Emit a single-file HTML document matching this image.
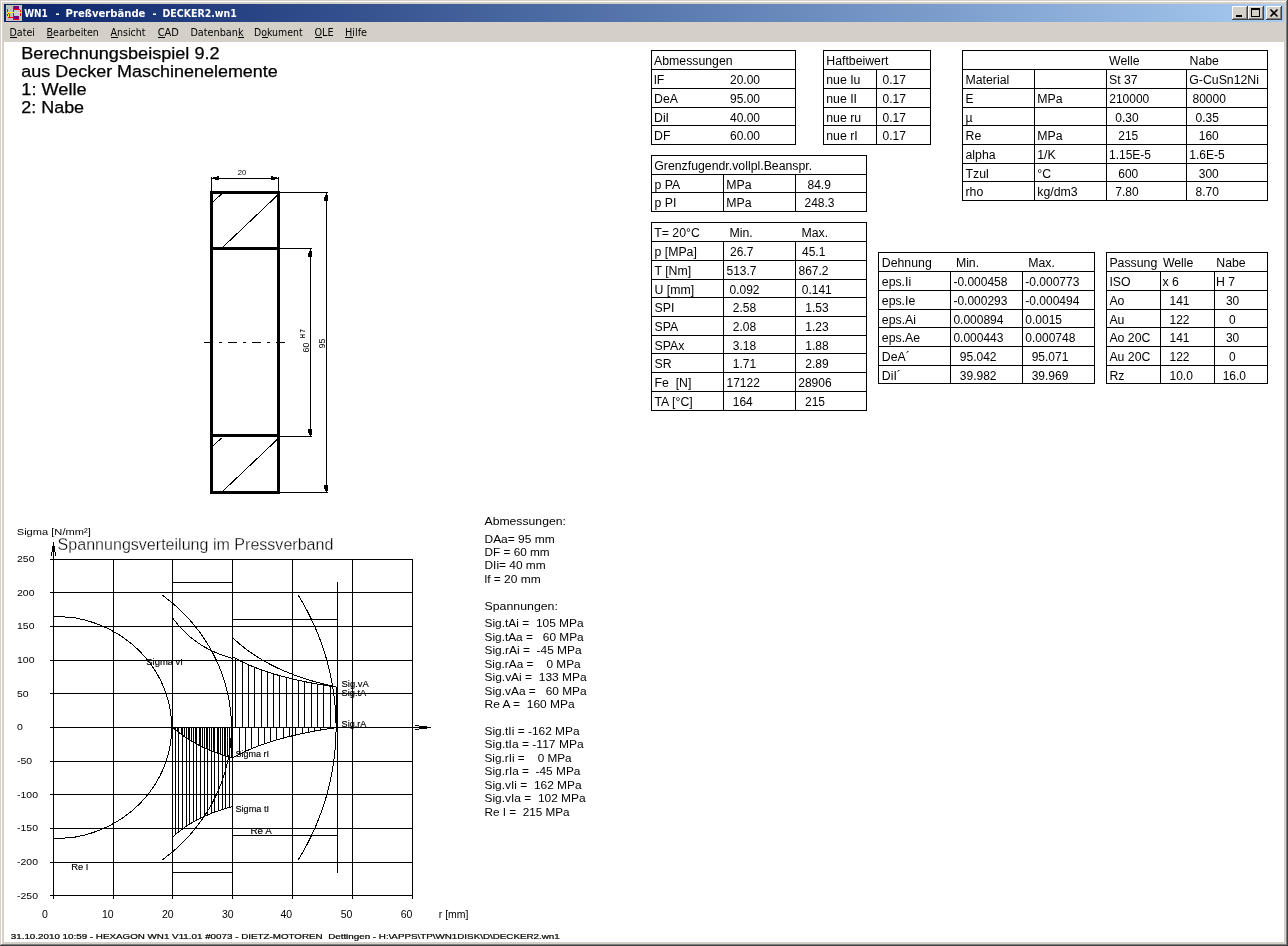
<!DOCTYPE html>
<html lang="de"><head><meta charset="utf-8"><title>WN1 - Preßverbände - DECKER2.wn1</title>
<style>
html,body{margin:0;padding:0;background:#d4d0c8;overflow:hidden}
svg{display:block;font-family:"Liberation Sans",sans-serif;will-change:transform;-webkit-font-smoothing:antialiased}
svg text{white-space:pre}
svg rect{shape-rendering:crispEdges}
</style></head><body>
<svg width="1288" height="946" viewBox="0 0 1288 946">
<rect x="0" y="0" width="1288" height="946" fill="#d4d0c8"/>
<rect x="1" y="1" width="1285" height="1" fill="#fff"/>
<rect x="1" y="1" width="1" height="943" fill="#fff"/>
<rect x="1287" y="0" width="1" height="946" fill="#404040"/>
<rect x="0" y="945" width="1288" height="1" fill="#404040"/>
<rect x="1286" y="1" width="1" height="944" fill="#808080"/>
<rect x="1" y="944" width="1286" height="1" fill="#808080"/>
<defs><linearGradient id="tg" x1="0" x2="1" y1="0" y2="0"><stop offset="0" stop-color="#0a246a"/><stop offset="1" stop-color="#a6caf0"/></linearGradient></defs>
<rect x="4" y="4" width="1280" height="18" fill="url(#tg)"/>
<rect x="4" y="42" width="1280" height="900" fill="#fff"/>
<rect x="6" y="5" width="16" height="16" fill="#c0c0c0"/>
<rect x="6" y="5" width="1" height="1" fill="#d4d0c8"/>
<rect x="21" y="5" width="1" height="1" fill="#d4d0c8"/>
<rect x="6" y="20" width="1" height="1" fill="#d4d0c8"/>
<rect x="21" y="20" width="1" height="1" fill="#d4d0c8"/>
<rect x="14" y="10" width="6" height="6" fill="#c4cccc"/>
<rect x="13" y="6" width="1" height="14" fill="#ff0000"/>
<rect x="14" y="9" width="6" height="1" fill="#ff0000"/>
<rect x="20" y="10" width="1" height="6" fill="#ff0000"/>
<rect x="13" y="19" width="6" height="1" fill="#ff0000"/>
<rect x="7" y="9" width="1" height="3" fill="#ff0000"/>
<rect x="7" y="14" width="1" height="2" fill="#ff0000"/>
<rect x="8" y="13" width="1" height="1" fill="#ff0000"/>
<rect x="9" y="14" width="1" height="4" fill="#ff0000"/>
<rect x="8" y="17" width="6" height="1" fill="#ff0000"/>
<rect x="14" y="6" width="5" height="3" fill="#800080"/>
<rect x="14" y="16" width="5" height="3" fill="#800080"/>
<rect x="7" y="12" width="7" height="1" fill="#ffff00"/>
<rect x="15" y="12" width="1" height="1" fill="#ffff00"/>
<rect x="17" y="12" width="1" height="1" fill="#ffff00"/>
<rect x="19" y="12" width="2" height="1" fill="#ffff00"/>
<rect x="8" y="14" width="1" height="3" fill="#ffff00"/>
<text x="24.2" y="17" font-size="10.8" textLength="23.60" lengthAdjust="spacingAndGlyphs" fill="#fff" font-weight="bold" font-family="DejaVu Sans Condensed, DejaVu Sans, Liberation Sans, sans-serif">WN1</text>
<text x="55.5" y="17" font-size="10.8" fill="#fff" font-weight="bold" font-family="DejaVu Sans Condensed, DejaVu Sans, Liberation Sans, sans-serif">-</text>
<text x="65.6" y="17" font-size="10.8" textLength="79.80" lengthAdjust="spacingAndGlyphs" fill="#fff" font-weight="bold" font-family="DejaVu Sans Condensed, DejaVu Sans, Liberation Sans, sans-serif">Preßverbände</text>
<text x="152.4" y="17" font-size="10.8" fill="#fff" font-weight="bold" font-family="DejaVu Sans Condensed, DejaVu Sans, Liberation Sans, sans-serif">-</text>
<text x="162.5" y="17" font-size="10.8" textLength="74.20" lengthAdjust="spacingAndGlyphs" fill="#fff" font-weight="bold" font-family="DejaVu Sans Condensed, DejaVu Sans, Liberation Sans, sans-serif">DECKER2.wn1</text>
<rect x="1232" y="6" width="16" height="14" fill="#d4d0c8"/>
<rect x="1232" y="6" width="15" height="1" fill="#fff"/>
<rect x="1232" y="6" width="1" height="13" fill="#fff"/>
<rect x="1247" y="6" width="1" height="14" fill="#404040"/>
<rect x="1232" y="19" width="16" height="1" fill="#404040"/>
<rect x="1246" y="7" width="1" height="12" fill="#808080"/>
<rect x="1233" y="18" width="14" height="1" fill="#808080"/>
<rect x="1248" y="6" width="16" height="14" fill="#d4d0c8"/>
<rect x="1248" y="6" width="15" height="1" fill="#fff"/>
<rect x="1248" y="6" width="1" height="13" fill="#fff"/>
<rect x="1263" y="6" width="1" height="14" fill="#404040"/>
<rect x="1248" y="19" width="16" height="1" fill="#404040"/>
<rect x="1262" y="7" width="1" height="12" fill="#808080"/>
<rect x="1249" y="18" width="14" height="1" fill="#808080"/>
<rect x="1266" y="6" width="16" height="14" fill="#d4d0c8"/>
<rect x="1266" y="6" width="15" height="1" fill="#fff"/>
<rect x="1266" y="6" width="1" height="13" fill="#fff"/>
<rect x="1281" y="6" width="1" height="14" fill="#404040"/>
<rect x="1266" y="19" width="16" height="1" fill="#404040"/>
<rect x="1280" y="7" width="1" height="12" fill="#808080"/>
<rect x="1267" y="18" width="14" height="1" fill="#808080"/>
<rect x="1236" y="15" width="6" height="2" fill="#000"/>
<rect x="1251" y="8" width="9" height="2" fill="#000"/><rect x="1251" y="10" width="1" height="7" fill="#000"/><rect x="1259" y="10" width="1" height="7" fill="#000"/><rect x="1251" y="16" width="9" height="1" fill="#000"/>
<path d="M1270.5 9.5 L1277.5 16.5 M1277.5 9.5 L1270.5 16.5" stroke="#000" stroke-width="1.7" fill="none"/>
<text x="9.5" y="36" font-size="10.8" textLength="25.40" lengthAdjust="spacingAndGlyphs" font-family="DejaVu Sans Condensed, DejaVu Sans, Liberation Sans, sans-serif">Datei</text>
<rect x="9.5" y="37" width="7.9" height="1" fill="#000"/>
<text x="46.6" y="36" font-size="10.8" textLength="52.30" lengthAdjust="spacingAndGlyphs" font-family="DejaVu Sans Condensed, DejaVu Sans, Liberation Sans, sans-serif">Bearbeiten</text>
<rect x="46.6" y="37" width="7.2" height="1" fill="#000"/>
<text x="110.6" y="36" font-size="10.8" textLength="34.90" lengthAdjust="spacingAndGlyphs" font-family="DejaVu Sans Condensed, DejaVu Sans, Liberation Sans, sans-serif">Ansicht</text>
<rect x="110.6" y="37" width="7.1" height="1" fill="#000"/>
<text x="157.7" y="36" font-size="10.8" textLength="21.20" lengthAdjust="spacingAndGlyphs" font-family="DejaVu Sans Condensed, DejaVu Sans, Liberation Sans, sans-serif">CAD</text>
<rect x="157.7" y="37" width="7.3" height="1" fill="#000"/>
<text x="190.4" y="36" font-size="10.8" textLength="53.10" lengthAdjust="spacingAndGlyphs" font-family="DejaVu Sans Condensed, DejaVu Sans, Liberation Sans, sans-serif">Datenbank</text>
<rect x="238.0" y="37" width="5.5" height="1" fill="#000"/>
<text x="254" y="36" font-size="10.8" textLength="48.60" lengthAdjust="spacingAndGlyphs" font-family="DejaVu Sans Condensed, DejaVu Sans, Liberation Sans, sans-serif">Dokument</text>
<rect x="261.7" y="37" width="5.9" height="1" fill="#000"/>
<text x="314.5" y="36" font-size="10.8" textLength="19.10" lengthAdjust="spacingAndGlyphs" font-family="DejaVu Sans Condensed, DejaVu Sans, Liberation Sans, sans-serif">OLE</text>
<rect x="314.5" y="37" width="7.4" height="1" fill="#000"/>
<text x="345" y="36" font-size="10.8" textLength="22.10" lengthAdjust="spacingAndGlyphs" font-family="DejaVu Sans Condensed, DejaVu Sans, Liberation Sans, sans-serif">Hilfe</text>
<rect x="345.0" y="37" width="8.0" height="1" fill="#000"/>
<text x="21.3" y="59" font-size="16.8" textLength="198.30" lengthAdjust="spacingAndGlyphs" stroke="#000" stroke-width="0.25">Berechnungsbeispiel 9.2</text>
<text x="21.3" y="77" font-size="16.8" textLength="256.50" lengthAdjust="spacingAndGlyphs" stroke="#000" stroke-width="0.25">aus Decker Maschinenelemente</text>
<text x="21.3" y="94.8" font-size="16.8" textLength="65.30" lengthAdjust="spacingAndGlyphs" stroke="#000" stroke-width="0.25">1: Welle</text>
<text x="21.3" y="112.8" font-size="16.8" textLength="62.80" lengthAdjust="spacingAndGlyphs" stroke="#000" stroke-width="0.25">2: Nabe</text>
<rect x="651" y="50" width="145" height="1" fill="#000"/>
<rect x="651" y="69" width="145" height="1" fill="#000"/>
<rect x="651" y="88" width="145" height="1" fill="#000"/>
<rect x="651" y="107" width="145" height="1" fill="#000"/>
<rect x="651" y="125" width="145" height="1" fill="#000"/>
<rect x="651" y="144" width="145" height="1" fill="#000"/>
<rect x="651" y="50" width="1" height="95" fill="#000"/>
<rect x="795" y="50" width="1" height="95" fill="#000"/>
<text x="654" y="64.5" font-size="12" textLength="78.64" lengthAdjust="spacingAndGlyphs">Abmessungen</text>
<text x="654" y="83.5" font-size="12" textLength="10.25" lengthAdjust="spacingAndGlyphs">lF</text>
<text x="730" y="83.5" font-size="12" textLength="30.03" lengthAdjust="spacingAndGlyphs">20.00</text>
<text x="654" y="102.5" font-size="12" textLength="23.93" lengthAdjust="spacingAndGlyphs">DeA</text>
<text x="730" y="102.5" font-size="12" textLength="30.03" lengthAdjust="spacingAndGlyphs">95.00</text>
<text x="654" y="121.5" font-size="12" textLength="15.03" lengthAdjust="spacingAndGlyphs">DiI</text>
<text x="730" y="121.5" font-size="12" textLength="30.03" lengthAdjust="spacingAndGlyphs">40.00</text>
<text x="654" y="139.5" font-size="12" textLength="16.40" lengthAdjust="spacingAndGlyphs">DF</text>
<text x="730" y="139.5" font-size="12" textLength="30.03" lengthAdjust="spacingAndGlyphs">60.00</text>
<rect x="823" y="50" width="108" height="1" fill="#000"/>
<rect x="823" y="69" width="108" height="1" fill="#000"/>
<rect x="823" y="88" width="108" height="1" fill="#000"/>
<rect x="823" y="107" width="108" height="1" fill="#000"/>
<rect x="823" y="125" width="108" height="1" fill="#000"/>
<rect x="823" y="144" width="108" height="1" fill="#000"/>
<rect x="823" y="50" width="1" height="95" fill="#000"/>
<rect x="930" y="50" width="1" height="95" fill="#000"/>
<rect x="876" y="69" width="1" height="76" fill="#000"/>
<text x="826.25" y="64.5" font-size="12" textLength="62.21" lengthAdjust="spacingAndGlyphs">Haftbeiwert</text>
<text x="826.25" y="83.5" font-size="12" textLength="34.20" lengthAdjust="spacingAndGlyphs">nue Iu</text>
<text x="882.5" y="83.5" font-size="12" textLength="23.36" lengthAdjust="spacingAndGlyphs">0.17</text>
<text x="826.25" y="102.5" font-size="12" textLength="30.77" lengthAdjust="spacingAndGlyphs">nue II</text>
<text x="882.5" y="102.5" font-size="12" textLength="23.36" lengthAdjust="spacingAndGlyphs">0.17</text>
<text x="826.25" y="121.5" font-size="12" textLength="34.88" lengthAdjust="spacingAndGlyphs">nue ru</text>
<text x="882.5" y="121.5" font-size="12" textLength="23.36" lengthAdjust="spacingAndGlyphs">0.17</text>
<text x="826.25" y="139.5" font-size="12" textLength="31.45" lengthAdjust="spacingAndGlyphs">nue rI</text>
<text x="882.5" y="139.5" font-size="12" textLength="23.36" lengthAdjust="spacingAndGlyphs">0.17</text>
<rect x="651" y="155" width="216" height="1" fill="#000"/>
<rect x="651" y="174" width="216" height="1" fill="#000"/>
<rect x="651" y="192" width="216" height="1" fill="#000"/>
<rect x="651" y="211" width="216" height="1" fill="#000"/>
<rect x="651" y="155" width="1" height="57" fill="#000"/>
<rect x="866" y="155" width="1" height="57" fill="#000"/>
<rect x="723" y="174" width="1" height="38" fill="#000"/>
<rect x="795" y="174" width="1" height="38" fill="#000"/>
<text x="654.25" y="169.5" font-size="12" textLength="157.95" lengthAdjust="spacingAndGlyphs">Grenzfugendr.vollpl.Beanspr.</text>
<text x="654.5" y="188.5" font-size="12" textLength="25.75" lengthAdjust="spacingAndGlyphs">p PA</text>
<text x="726.25" y="188.5" font-size="12" textLength="25.29" lengthAdjust="spacingAndGlyphs">MPa</text>
<text x="807.5" y="188.5" font-size="12" textLength="23.36" lengthAdjust="spacingAndGlyphs">84.9</text>
<text x="654.5" y="206.5" font-size="12" textLength="21.88" lengthAdjust="spacingAndGlyphs">p PI</text>
<text x="726.25" y="206.5" font-size="12" textLength="25.29" lengthAdjust="spacingAndGlyphs">MPa</text>
<text x="804.5" y="206.5" font-size="12" textLength="30.03" lengthAdjust="spacingAndGlyphs">248.3</text>
<rect x="651" y="222" width="216" height="1" fill="#000"/>
<rect x="651" y="241" width="216" height="1" fill="#000"/>
<rect x="651" y="260" width="216" height="1" fill="#000"/>
<rect x="651" y="279" width="216" height="1" fill="#000"/>
<rect x="651" y="297" width="216" height="1" fill="#000"/>
<rect x="651" y="316" width="216" height="1" fill="#000"/>
<rect x="651" y="335" width="216" height="1" fill="#000"/>
<rect x="651" y="353" width="216" height="1" fill="#000"/>
<rect x="651" y="372" width="216" height="1" fill="#000"/>
<rect x="651" y="391" width="216" height="1" fill="#000"/>
<rect x="651" y="410" width="216" height="1" fill="#000"/>
<rect x="651" y="222" width="1" height="189" fill="#000"/>
<rect x="866" y="222" width="1" height="189" fill="#000"/>
<rect x="723" y="241" width="1" height="170" fill="#000"/>
<rect x="795" y="241" width="1" height="170" fill="#000"/>
<text x="654.25" y="236.5" font-size="12" textLength="45.60" lengthAdjust="spacingAndGlyphs">T= 20°C</text>
<text x="729.5" y="236.5" font-size="12" textLength="23.24" lengthAdjust="spacingAndGlyphs">Min.</text>
<text x="801.5" y="236.5" font-size="12" textLength="26.65" lengthAdjust="spacingAndGlyphs">Max.</text>
<text x="654.5" y="255.5" font-size="12" textLength="42.38" lengthAdjust="spacingAndGlyphs">p [MPa]</text>
<text x="730" y="255.5" font-size="12" textLength="23.36" lengthAdjust="spacingAndGlyphs">26.7</text>
<text x="802" y="255.5" font-size="12" textLength="23.36" lengthAdjust="spacingAndGlyphs">45.1</text>
<text x="654.5" y="274.5" font-size="12" textLength="36.67" lengthAdjust="spacingAndGlyphs">T [Nm]</text>
<text x="726.5" y="274.5" font-size="12" textLength="30.03" lengthAdjust="spacingAndGlyphs">513.7</text>
<text x="798.5" y="274.5" font-size="12" textLength="30.03" lengthAdjust="spacingAndGlyphs">867.2</text>
<text x="654.5" y="293.5" font-size="12" textLength="39.63" lengthAdjust="spacingAndGlyphs">U [mm]</text>
<text x="729.5" y="293.5" font-size="12" textLength="30.03" lengthAdjust="spacingAndGlyphs">0.092</text>
<text x="801.75" y="293.5" font-size="12" textLength="30.03" lengthAdjust="spacingAndGlyphs">0.141</text>
<text x="654.5" y="311.5" font-size="12" textLength="19.83" lengthAdjust="spacingAndGlyphs">SPI</text>
<text x="732.75" y="311.5" font-size="12" textLength="23.36" lengthAdjust="spacingAndGlyphs">2.58</text>
<text x="805.25" y="311.5" font-size="12" textLength="23.36" lengthAdjust="spacingAndGlyphs">1.53</text>
<text x="654.5" y="330.5" font-size="12" textLength="23.70" lengthAdjust="spacingAndGlyphs">SPA</text>
<text x="732.75" y="330.5" font-size="12" textLength="23.36" lengthAdjust="spacingAndGlyphs">2.08</text>
<text x="805.25" y="330.5" font-size="12" textLength="23.36" lengthAdjust="spacingAndGlyphs">1.23</text>
<text x="654.5" y="349.5" font-size="12" textLength="29.85" lengthAdjust="spacingAndGlyphs">SPAx</text>
<text x="732.75" y="349.5" font-size="12" textLength="23.36" lengthAdjust="spacingAndGlyphs">3.18</text>
<text x="805.25" y="349.5" font-size="12" textLength="23.36" lengthAdjust="spacingAndGlyphs">1.88</text>
<text x="654.5" y="367.5" font-size="12" textLength="17.09" lengthAdjust="spacingAndGlyphs">SR</text>
<text x="732.75" y="367.5" font-size="12" textLength="23.36" lengthAdjust="spacingAndGlyphs">1.71</text>
<text x="805.25" y="367.5" font-size="12" textLength="23.36" lengthAdjust="spacingAndGlyphs">2.89</text>
<text x="654.5" y="386.5" font-size="12" textLength="36.91" lengthAdjust="spacingAndGlyphs">Fe  [N]</text>
<text x="726.5" y="386.5" font-size="12" textLength="33.37" lengthAdjust="spacingAndGlyphs">17122</text>
<text x="798.25" y="386.5" font-size="12" textLength="33.37" lengthAdjust="spacingAndGlyphs">28906</text>
<text x="654.5" y="405.5" font-size="12" textLength="38.18" lengthAdjust="spacingAndGlyphs">TA [°C]</text>
<text x="732.75" y="405.5" font-size="12" textLength="20.02" lengthAdjust="spacingAndGlyphs">164</text>
<text x="805" y="405.5" font-size="12" textLength="20.02" lengthAdjust="spacingAndGlyphs">215</text>
<rect x="962" y="50" width="306" height="1" fill="#000"/>
<rect x="962" y="69" width="306" height="1" fill="#000"/>
<rect x="962" y="88" width="306" height="1" fill="#000"/>
<rect x="962" y="107" width="306" height="1" fill="#000"/>
<rect x="962" y="125" width="306" height="1" fill="#000"/>
<rect x="962" y="144" width="306" height="1" fill="#000"/>
<rect x="962" y="163" width="306" height="1" fill="#000"/>
<rect x="962" y="181" width="306" height="1" fill="#000"/>
<rect x="962" y="200" width="306" height="1" fill="#000"/>
<rect x="962" y="50" width="1" height="151" fill="#000"/>
<rect x="1267" y="50" width="1" height="151" fill="#000"/>
<rect x="1034" y="69" width="1" height="132" fill="#000"/>
<rect x="1106" y="69" width="1" height="132" fill="#000"/>
<rect x="1186" y="69" width="1" height="132" fill="#000"/>
<text x="1109" y="64.5" font-size="12" textLength="30.53" lengthAdjust="spacingAndGlyphs">Welle</text>
<text x="1189.5" y="64.5" font-size="12" textLength="29.40" lengthAdjust="spacingAndGlyphs">Nabe</text>
<text x="965.5" y="83.5" font-size="12" textLength="43.75" lengthAdjust="spacingAndGlyphs">Material</text>
<text x="1109" y="83.5" font-size="12" textLength="28.72" lengthAdjust="spacingAndGlyphs">St 37</text>
<text x="1189.25" y="83.5" font-size="12" textLength="69.73" lengthAdjust="spacingAndGlyphs">G-CuSn12Ni</text>
<text x="965.5" y="102.5" font-size="12" textLength="8.00" lengthAdjust="spacingAndGlyphs">E</text>
<text x="1037.25" y="102.5" font-size="12" textLength="25.29" lengthAdjust="spacingAndGlyphs">MPa</text>
<text x="1109.25" y="102.5" font-size="12" textLength="40.04" lengthAdjust="spacingAndGlyphs">210000</text>
<text x="1192.5" y="102.5" font-size="12" textLength="33.37" lengthAdjust="spacingAndGlyphs">80000</text>
<text x="965.5" y="121.5" font-size="12" textLength="7.09" lengthAdjust="spacingAndGlyphs">µ</text>
<text x="1115.25" y="121.5" font-size="12" textLength="23.36" lengthAdjust="spacingAndGlyphs">0.30</text>
<text x="1195.5" y="121.5" font-size="12" textLength="23.36" lengthAdjust="spacingAndGlyphs">0.35</text>
<text x="965.5" y="139.5" font-size="12" textLength="15.72" lengthAdjust="spacingAndGlyphs">Re</text>
<text x="1037.25" y="139.5" font-size="12" textLength="25.29" lengthAdjust="spacingAndGlyphs">MPa</text>
<text x="1118.25" y="139.5" font-size="12" textLength="20.02" lengthAdjust="spacingAndGlyphs">215</text>
<text x="1198.75" y="139.5" font-size="12" textLength="20.02" lengthAdjust="spacingAndGlyphs">160</text>
<text x="965.5" y="158.5" font-size="12" textLength="30.10" lengthAdjust="spacingAndGlyphs">alpha</text>
<text x="1037.25" y="158.5" font-size="12" textLength="18.46" lengthAdjust="spacingAndGlyphs">1/K</text>
<text x="1109" y="158.5" font-size="12" textLength="42.03" lengthAdjust="spacingAndGlyphs">1.15E-5</text>
<text x="1189.25" y="158.5" font-size="12" textLength="35.36" lengthAdjust="spacingAndGlyphs">1.6E-5</text>
<text x="965.5" y="177.5" font-size="12" textLength="23.24" lengthAdjust="spacingAndGlyphs">Tzul</text>
<text x="1037.25" y="177.5" font-size="12" textLength="13.80" lengthAdjust="spacingAndGlyphs">°C</text>
<text x="1118.25" y="177.5" font-size="12" textLength="20.02" lengthAdjust="spacingAndGlyphs">600</text>
<text x="1198.75" y="177.5" font-size="12" textLength="20.02" lengthAdjust="spacingAndGlyphs">300</text>
<text x="965.5" y="195.5" font-size="12" textLength="17.78" lengthAdjust="spacingAndGlyphs">rho</text>
<text x="1037.25" y="195.5" font-size="12" textLength="40.34" lengthAdjust="spacingAndGlyphs">kg/dm3</text>
<text x="1115.25" y="195.5" font-size="12" textLength="23.36" lengthAdjust="spacingAndGlyphs">7.80</text>
<text x="1195.5" y="195.5" font-size="12" textLength="23.36" lengthAdjust="spacingAndGlyphs">8.70</text>
<rect x="878" y="252" width="217" height="1" fill="#000"/>
<rect x="878" y="271" width="217" height="1" fill="#000"/>
<rect x="878" y="290" width="217" height="1" fill="#000"/>
<rect x="878" y="309" width="217" height="1" fill="#000"/>
<rect x="878" y="327" width="217" height="1" fill="#000"/>
<rect x="878" y="346" width="217" height="1" fill="#000"/>
<rect x="878" y="365" width="217" height="1" fill="#000"/>
<rect x="878" y="383" width="217" height="1" fill="#000"/>
<rect x="878" y="252" width="1" height="132" fill="#000"/>
<rect x="1094" y="252" width="1" height="132" fill="#000"/>
<rect x="950" y="271" width="1" height="113" fill="#000"/>
<rect x="1022" y="271" width="1" height="113" fill="#000"/>
<text x="881.8" y="266.5" font-size="12" textLength="49.93" lengthAdjust="spacingAndGlyphs">Dehnung</text>
<text x="955.9" y="266.5" font-size="12" textLength="23.24" lengthAdjust="spacingAndGlyphs">Min.</text>
<text x="1028.2" y="266.5" font-size="12" textLength="26.65" lengthAdjust="spacingAndGlyphs">Max.</text>
<text x="881.8" y="285.5" font-size="12" textLength="29.40" lengthAdjust="spacingAndGlyphs">eps.Ii</text>
<text x="953.4" y="285.5" font-size="12" textLength="54.05" lengthAdjust="spacingAndGlyphs">-0.000458</text>
<text x="1025.3" y="285.5" font-size="12" textLength="54.05" lengthAdjust="spacingAndGlyphs">-0.000773</text>
<text x="881.8" y="304.5" font-size="12" textLength="33.51" lengthAdjust="spacingAndGlyphs">eps.Ie</text>
<text x="953.4" y="304.5" font-size="12" textLength="54.05" lengthAdjust="spacingAndGlyphs">-0.000293</text>
<text x="1025.3" y="304.5" font-size="12" textLength="54.05" lengthAdjust="spacingAndGlyphs">-0.000494</text>
<text x="881.8" y="323.5" font-size="12" textLength="34.19" lengthAdjust="spacingAndGlyphs">eps.Ai</text>
<text x="953.4" y="323.5" font-size="12" textLength="50.05" lengthAdjust="spacingAndGlyphs">0.000894</text>
<text x="1025.3" y="323.5" font-size="12" textLength="36.70" lengthAdjust="spacingAndGlyphs">0.0015</text>
<text x="881.8" y="341.5" font-size="12" textLength="38.29" lengthAdjust="spacingAndGlyphs">eps.Ae</text>
<text x="953.4" y="341.5" font-size="12" textLength="50.05" lengthAdjust="spacingAndGlyphs">0.000443</text>
<text x="1025.3" y="341.5" font-size="12" textLength="50.05" lengthAdjust="spacingAndGlyphs">0.000748</text>
<text x="881.8" y="360.5" font-size="12" textLength="28.02" lengthAdjust="spacingAndGlyphs">DeA´</text>
<text x="959.8" y="360.5" font-size="12" textLength="36.70" lengthAdjust="spacingAndGlyphs">95.042</text>
<text x="1031.7" y="360.5" font-size="12" textLength="36.70" lengthAdjust="spacingAndGlyphs">95.071</text>
<text x="881.8" y="379.5" font-size="12" textLength="19.13" lengthAdjust="spacingAndGlyphs">DiI´</text>
<text x="959.8" y="379.5" font-size="12" textLength="36.70" lengthAdjust="spacingAndGlyphs">39.982</text>
<text x="1031.7" y="379.5" font-size="12" textLength="36.70" lengthAdjust="spacingAndGlyphs">39.969</text>
<rect x="1106" y="252" width="162" height="1" fill="#000"/>
<rect x="1106" y="271" width="162" height="1" fill="#000"/>
<rect x="1106" y="290" width="162" height="1" fill="#000"/>
<rect x="1106" y="309" width="162" height="1" fill="#000"/>
<rect x="1106" y="327" width="162" height="1" fill="#000"/>
<rect x="1106" y="346" width="162" height="1" fill="#000"/>
<rect x="1106" y="365" width="162" height="1" fill="#000"/>
<rect x="1106" y="383" width="162" height="1" fill="#000"/>
<rect x="1106" y="252" width="1" height="132" fill="#000"/>
<rect x="1267" y="252" width="1" height="132" fill="#000"/>
<rect x="1160" y="271" width="1" height="113" fill="#000"/>
<rect x="1214" y="271" width="1" height="113" fill="#000"/>
<text x="1109.4" y="266.5" font-size="12" textLength="47.87" lengthAdjust="spacingAndGlyphs">Passung</text>
<text x="1162.9" y="266.5" font-size="12" textLength="30.53" lengthAdjust="spacingAndGlyphs">Welle</text>
<text x="1216.3" y="266.5" font-size="12" textLength="29.40" lengthAdjust="spacingAndGlyphs">Nabe</text>
<text x="1109.4" y="285.5" font-size="12" textLength="21.19" lengthAdjust="spacingAndGlyphs">ISO</text>
<text x="1162.5" y="285.5" font-size="12" textLength="16.41" lengthAdjust="spacingAndGlyphs">x 6</text>
<text x="1216" y="285.5" font-size="12" textLength="19.14" lengthAdjust="spacingAndGlyphs">H 7</text>
<text x="1109.4" y="304.5" font-size="12" textLength="15.04" lengthAdjust="spacingAndGlyphs">Ao</text>
<text x="1169.5" y="304.5" font-size="12" textLength="20.02" lengthAdjust="spacingAndGlyphs">141</text>
<text x="1225.9" y="304.5" font-size="12" textLength="13.35" lengthAdjust="spacingAndGlyphs">30</text>
<text x="1109.4" y="323.5" font-size="12" textLength="15.04" lengthAdjust="spacingAndGlyphs">Au</text>
<text x="1169.5" y="323.5" font-size="12" textLength="20.02" lengthAdjust="spacingAndGlyphs">122</text>
<text x="1229" y="323.5" font-size="12" textLength="6.67" lengthAdjust="spacingAndGlyphs">0</text>
<text x="1109.4" y="341.5" font-size="12" textLength="41.03" lengthAdjust="spacingAndGlyphs">Ao 20C</text>
<text x="1169.5" y="341.5" font-size="12" textLength="20.02" lengthAdjust="spacingAndGlyphs">141</text>
<text x="1225.9" y="341.5" font-size="12" textLength="13.35" lengthAdjust="spacingAndGlyphs">30</text>
<text x="1109.4" y="360.5" font-size="12" textLength="41.03" lengthAdjust="spacingAndGlyphs">Au 20C</text>
<text x="1169.5" y="360.5" font-size="12" textLength="20.02" lengthAdjust="spacingAndGlyphs">122</text>
<text x="1229" y="360.5" font-size="12" textLength="6.67" lengthAdjust="spacingAndGlyphs">0</text>
<text x="1109.4" y="379.5" font-size="12" textLength="15.03" lengthAdjust="spacingAndGlyphs">Rz</text>
<text x="1169.5" y="379.5" font-size="12" textLength="23.36" lengthAdjust="spacingAndGlyphs">10.0</text>
<text x="1222.7" y="379.5" font-size="12" textLength="23.36" lengthAdjust="spacingAndGlyphs">16.0</text>
<rect x="210" y="191" width="3" height="303" fill="#000"/>
<rect x="277" y="191" width="3" height="303" fill="#000"/>
<rect x="210" y="191" width="70" height="3" fill="#000"/>
<rect x="210" y="247" width="70" height="3" fill="#000"/>
<rect x="210" y="434" width="70" height="3" fill="#000"/>
<rect x="210" y="491" width="70" height="3" fill="#000"/>
<line x1="212.7" y1="202.3" x2="221.5" y2="194" stroke="#000" stroke-width="1" shape-rendering="crispEdges" />
<line x1="222.8" y1="247.2" x2="277.4" y2="195.3" stroke="#000" stroke-width="1" shape-rendering="crispEdges" />
<line x1="212.7" y1="446.3" x2="221.5" y2="438" stroke="#000" stroke-width="1" shape-rendering="crispEdges" />
<line x1="222.8" y1="491.2" x2="277.4" y2="439.3" stroke="#000" stroke-width="1" shape-rendering="crispEdges" />
<rect x="204" y="342" width="9" height="1" fill="#000"/>
<rect x="219" y="342" width="3" height="1" fill="#000"/>
<rect x="228" y="342" width="9" height="1" fill="#000"/>
<rect x="243" y="342" width="3" height="1" fill="#000"/>
<rect x="252" y="342" width="9" height="1" fill="#000"/>
<rect x="267" y="342" width="3" height="1" fill="#000"/>
<rect x="276" y="342" width="9" height="1" fill="#000"/>
<rect x="211" y="177" width="1" height="15" fill="#000"/>
<rect x="278" y="177" width="1" height="15" fill="#000"/>
<rect x="211" y="178" width="68" height="1" fill="#000"/>
<rect x="213" y="177" width="2" height="2" fill="#000"/><rect x="215" y="177" width="4" height="3" fill="#000"/><rect x="217" y="176" width="2" height="1" fill="#000"/>
<rect x="275" y="177" width="2" height="2" fill="#000"/><rect x="271" y="177" width="4" height="3" fill="#000"/><rect x="271" y="176" width="2" height="1" fill="#000"/>
<text x="237.8" y="175" font-size="7.6" textLength="8.60" lengthAdjust="spacingAndGlyphs">20</text>
<rect x="279" y="192" width="49" height="1" fill="#000"/>
<rect x="279" y="492" width="49" height="1" fill="#000"/>
<rect x="279" y="248" width="33" height="1" fill="#000"/>
<rect x="279" y="436" width="33" height="1" fill="#000"/>
<rect x="326" y="192" width="1" height="301" fill="#000"/>
<rect x="310" y="248" width="1" height="189" fill="#000"/>
<rect x="325" y="195" width="3" height="3" fill="#000"/><rect x="324" y="197" width="4" height="4" fill="#000"/>
<rect x="325" y="488" width="3" height="3" fill="#000"/><rect x="324" y="485" width="4" height="4" fill="#000"/>
<rect x="309" y="251" width="3" height="3" fill="#000"/><rect x="308" y="253" width="4" height="4" fill="#000"/>
<rect x="309" y="432" width="3" height="3" fill="#000"/><rect x="308" y="429" width="4" height="4" fill="#000"/>
<text transform="translate(325,348.4) rotate(-90)" font-size="9.7" textLength="9.8" lengthAdjust="spacingAndGlyphs">95</text>
<text transform="translate(309.2,352.4) rotate(-90)" font-size="9.7" textLength="9.8" lengthAdjust="spacingAndGlyphs">60</text>
<text transform="translate(304.8,338.3) rotate(-90)" font-size="6.8" textLength="9.2" lengthAdjust="spacingAndGlyphs" font-weight="bold">H 7</text>
<rect x="53" y="559" width="1" height="340" fill="#000"/>
<rect x="113" y="559" width="1" height="340" fill="#000"/>
<rect x="172" y="559" width="1" height="340" fill="#000"/>
<rect x="232" y="559" width="1" height="340" fill="#000"/>
<rect x="292" y="559" width="1" height="340" fill="#000"/>
<rect x="352" y="559" width="1" height="340" fill="#000"/>
<rect x="412" y="559" width="1" height="340" fill="#000"/>
<rect x="50" y="559" width="363" height="1" fill="#000"/>
<rect x="50" y="592" width="363" height="1" fill="#000"/>
<rect x="50" y="626" width="363" height="1" fill="#000"/>
<rect x="50" y="660" width="363" height="1" fill="#000"/>
<rect x="50" y="693" width="363" height="1" fill="#000"/>
<rect x="50" y="727" width="363" height="1" fill="#000"/>
<rect x="50" y="761" width="363" height="1" fill="#000"/>
<rect x="50" y="794" width="363" height="1" fill="#000"/>
<rect x="50" y="828" width="363" height="1" fill="#000"/>
<rect x="50" y="862" width="363" height="1" fill="#000"/>
<rect x="50" y="895" width="363" height="1" fill="#000"/>
<rect x="53" y="542" width="1" height="18" fill="#000"/>
<rect x="52" y="546" width="3" height="6" fill="#000"/>
<rect x="51" y="552" width="1" height="4" fill="#000"/>
<rect x="55" y="552" width="1" height="4" fill="#000"/>
<rect x="413" y="727" width="18" height="1" fill="#000"/>
<rect x="419" y="726" width="8" height="3" fill="#000"/>
<rect x="415" y="725" width="4" height="1" fill="#000"/>
<rect x="415" y="729" width="4" height="1" fill="#000"/>
<text x="57.6" y="550.3" font-size="16.8" textLength="275.80" lengthAdjust="spacingAndGlyphs" stroke="#fff" stroke-width="0.3">Spannungsverteilung im Pressverband</text>
<text x="16.75" y="535" font-size="9.8" textLength="74.00" lengthAdjust="spacingAndGlyphs">Sigma [N/mm²]</text>
<text x="17" y="562.05" font-size="9.8" textLength="17.50" lengthAdjust="spacingAndGlyphs">250</text>
<text x="17" y="595.7" font-size="9.8" textLength="17.50" lengthAdjust="spacingAndGlyphs">200</text>
<text x="17" y="629.35" font-size="9.8" textLength="17.50" lengthAdjust="spacingAndGlyphs">150</text>
<text x="17" y="663" font-size="9.8" textLength="17.50" lengthAdjust="spacingAndGlyphs">100</text>
<text x="17" y="696.65" font-size="9.8" textLength="11.66" lengthAdjust="spacingAndGlyphs">50</text>
<text x="17" y="730.3" font-size="9.8" textLength="5.83" lengthAdjust="spacingAndGlyphs">0</text>
<text x="17" y="763.95" font-size="9.8" textLength="15.16" lengthAdjust="spacingAndGlyphs">-50</text>
<text x="17" y="797.6" font-size="9.8" textLength="20.99" lengthAdjust="spacingAndGlyphs">-100</text>
<text x="17" y="831.25" font-size="9.8" textLength="20.99" lengthAdjust="spacingAndGlyphs">-150</text>
<text x="17" y="864.9" font-size="9.8" textLength="20.99" lengthAdjust="spacingAndGlyphs">-200</text>
<text x="17" y="898.55" font-size="9.8" textLength="20.99" lengthAdjust="spacingAndGlyphs">-250</text>
<text x="42" y="917.5" font-size="10" textLength="5.84" lengthAdjust="spacingAndGlyphs">0</text>
<text x="102" y="917.5" font-size="10" textLength="11.68" lengthAdjust="spacingAndGlyphs">10</text>
<text x="162" y="917.5" font-size="10" textLength="11.68" lengthAdjust="spacingAndGlyphs">20</text>
<text x="222" y="917.5" font-size="10" textLength="11.68" lengthAdjust="spacingAndGlyphs">30</text>
<text x="280.5" y="917.5" font-size="10" textLength="11.68" lengthAdjust="spacingAndGlyphs">40</text>
<text x="340.75" y="917.5" font-size="10" textLength="11.68" lengthAdjust="spacingAndGlyphs">50</text>
<text x="400.75" y="917.5" font-size="10" textLength="11.68" lengthAdjust="spacingAndGlyphs">60</text>
<text x="438.75" y="917.5" font-size="10" textLength="29.74" lengthAdjust="spacingAndGlyphs">r [mm]</text>
<polyline points="232.70,656.86 235.32,658.31 237.93,659.69 240.55,661.01 243.17,662.28 245.78,663.49 248.40,664.66 251.01,665.79 253.63,666.86 256.25,667.90 258.86,668.90 261.48,669.86 264.10,670.79 266.71,671.68 269.33,672.54 271.94,673.36 274.56,674.16 277.18,674.93 279.79,675.68 282.41,676.40 285.03,677.09 287.64,677.77 290.26,678.42 292.87,679.04 295.49,679.65 298.11,680.24 300.72,680.81 303.34,681.36 305.96,681.90 308.57,682.42 311.19,682.92 313.80,683.41 316.42,683.88 319.04,684.34 321.65,684.79 324.27,685.23 326.89,685.65 329.50,686.06 332.12,686.45 334.73,686.84 337.35,687.22" fill="none" stroke="#000" stroke-width="1" shape-rendering="crispEdges"/>
<polyline points="232.70,757.85 235.32,756.41 237.93,755.03 240.55,753.71 243.17,752.44 245.78,751.22 248.40,750.05 251.01,748.93 253.63,747.85 256.25,746.82 258.86,745.82 261.48,744.86 264.10,743.93 266.71,743.04 269.33,742.18 271.94,741.35 274.56,740.55 277.18,739.78 279.79,739.04 282.41,738.32 285.03,737.62 287.64,736.95 290.26,736.30 292.87,735.67 295.49,735.06 298.11,734.48 300.72,733.90 303.34,733.35 305.96,732.82 308.57,732.30 311.19,731.79 313.80,731.31 316.42,730.83 319.04,730.37 321.65,729.93 324.27,729.49 326.89,729.07 329.50,728.66 332.12,728.26 334.73,727.88 337.35,727.50" fill="none" stroke="#000" stroke-width="1" shape-rendering="crispEdges"/>
<polyline points="232.70,637.75 235.32,640.18 237.93,642.51 240.55,644.73 243.17,646.86 245.78,648.90 248.40,650.86 251.01,652.73 253.63,654.53 256.25,656.25 258.86,657.91 261.48,659.50 264.10,661.03 266.71,662.50 269.33,663.91 271.94,665.27 274.56,666.58 277.18,667.84 279.79,669.05 282.41,670.22 285.03,671.34 287.64,672.43 290.26,673.47 292.87,674.48 295.49,675.46 298.11,676.40 300.72,677.30 303.34,678.18 305.96,679.02 308.57,679.84 311.19,680.63 313.80,681.39 316.42,682.13 319.04,682.84 321.65,683.53 324.27,684.19 326.89,684.84 329.50,685.46 332.12,686.07 334.73,686.65 337.35,687.22" fill="none" stroke="#000" stroke-width="1" shape-rendering="crispEdges"/>
<polyline points="172.90,836.77 174.40,835.43 175.89,834.14 177.38,832.89 178.88,831.69 180.38,830.53 181.87,829.41 183.37,828.33 184.86,827.29 186.36,826.28 187.85,825.30 189.35,824.36 190.84,823.45 192.33,822.56 193.83,821.71 195.32,820.88 196.82,820.07 198.31,819.30 199.81,818.54 201.31,817.81 202.80,817.10 204.30,816.41 205.79,815.74 207.29,815.09 208.78,814.46 210.28,813.85 211.77,813.25 213.26,812.67 214.76,812.11 216.25,811.56 217.75,811.03 219.25,810.51 220.74,810.01 222.24,809.52 223.73,809.04 225.23,808.57 226.72,808.12 228.22,807.68 229.71,807.25 231.20,806.83 232.70,806.42" fill="none" stroke="#000" stroke-width="1" shape-rendering="crispEdges"/>
<polyline points="172.90,727.50 174.40,728.84 175.89,730.13 177.38,731.38 178.88,732.58 180.38,733.74 181.87,734.86 183.37,735.94 184.86,736.98 186.36,737.99 187.85,738.97 189.35,739.91 190.84,740.82 192.33,741.71 193.83,742.56 195.32,743.39 196.82,744.19 198.31,744.97 199.81,745.73 201.31,746.46 202.80,747.17 204.30,747.86 205.79,748.53 207.29,749.18 208.78,749.81 210.28,750.42 211.77,751.01 213.26,751.59 214.76,752.16 216.25,752.70 217.75,753.24 219.25,753.76 220.74,754.26 222.24,754.75 223.73,755.23 225.23,755.69 226.72,756.15 228.22,756.59 229.71,757.02 231.20,757.44 232.70,757.85" fill="none" stroke="#000" stroke-width="1" shape-rendering="crispEdges"/>
<polyline points="172.90,618.23 174.40,620.24 175.89,622.16 177.38,623.99 178.88,625.76 180.38,627.44 181.87,629.06 183.37,630.61 184.86,632.10 186.36,633.53 187.85,634.90 189.35,636.21 190.84,637.47 192.33,638.69 193.83,639.85 195.32,640.97 196.82,642.04 198.31,643.07 199.81,644.06 201.31,645.02 202.80,645.94 204.30,646.82 205.79,647.67 207.29,648.48 208.78,649.27 210.28,650.02 211.77,650.75 213.26,651.45 214.76,652.13 216.25,652.78 217.75,653.41 219.25,654.01 220.74,654.59 222.24,655.15 223.73,655.69 225.23,656.21 226.72,656.71 228.22,657.20 229.71,657.67 231.20,658.12 232.70,658.55" fill="none" stroke="#000" stroke-width="1" shape-rendering="crispEdges"/>
<rect x="235" y="658.619" width="1" height="68.8813" fill="#000"/>
<rect x="242" y="661.806" width="1" height="65.6941" fill="#000"/>
<rect x="248" y="664.69" width="1" height="62.8096" fill="#000"/>
<rect x="254" y="667.309" width="1" height="60.1907" fill="#000"/>
<rect x="261" y="669.694" width="1" height="57.8057" fill="#000"/>
<rect x="267" y="671.872" width="1" height="55.6276" fill="#000"/>
<rect x="273" y="673.867" width="1" height="53.6331" fill="#000"/>
<rect x="279" y="675.698" width="1" height="51.8021" fill="#000"/>
<rect x="286" y="677.383" width="1" height="50.1173" fill="#000"/>
<rect x="292" y="678.937" width="1" height="48.5635" fill="#000"/>
<rect x="298" y="680.373" width="1" height="47.1274" fill="#000"/>
<rect x="304" y="681.703" width="1" height="45.7975" fill="#000"/>
<rect x="311" y="682.936" width="1" height="44.5635" fill="#000"/>
<rect x="317" y="684.084" width="1" height="43.4165" fill="#000"/>
<rect x="323" y="685.152" width="1" height="42.3484" fill="#000"/>
<rect x="330" y="686.148" width="1" height="41.3522" fill="#000"/>
<rect x="336" y="687.078" width="1" height="40.4215" fill="#000"/>
<rect x="239" y="727.5" width="1" height="26.8324" fill="#000"/>
<rect x="245" y="727.5" width="1" height="23.8141" fill="#000"/>
<rect x="251" y="727.5" width="1" height="21.0777" fill="#000"/>
<rect x="258" y="727.5" width="1" height="18.589" fill="#000"/>
<rect x="264" y="727.5" width="1" height="16.3191" fill="#000"/>
<rect x="270" y="727.5" width="1" height="14.2431" fill="#000"/>
<rect x="276" y="727.5" width="1" height="12.3394" fill="#000"/>
<rect x="283" y="727.5" width="1" height="10.5896" fill="#000"/>
<rect x="289" y="727.5" width="1" height="8.97742" fill="#000"/>
<rect x="295" y="727.5" width="1" height="7.48889" fill="#000"/>
<rect x="302" y="727.5" width="1" height="6.11164" fill="#000"/>
<rect x="308" y="727.5" width="1" height="4.83486" fill="#000"/>
<rect x="314" y="727.5" width="1" height="3.649" fill="#000"/>
<rect x="320" y="727.5" width="1" height="2.54563" fill="#000"/>
<rect x="327" y="727.5" width="1" height="1.51729" fill="#000"/>
<rect x="333" y="727.5" width="1" height="0.557302" fill="#000"/>
<rect x="175" y="727.5" width="1" height="107.14" fill="#000"/>
<rect x="178" y="727.5" width="1" height="104.168" fill="#000"/>
<rect x="182" y="727.5" width="1" height="101.441" fill="#000"/>
<rect x="186" y="727.5" width="1" height="98.933" fill="#000"/>
<rect x="189" y="727.5" width="1" height="96.6216" fill="#000"/>
<rect x="193" y="727.5" width="1" height="94.4864" fill="#000"/>
<rect x="196" y="727.5" width="1" height="92.5101" fill="#000"/>
<rect x="200" y="727.5" width="1" height="90.6772" fill="#000"/>
<rect x="204" y="727.5" width="1" height="88.9742" fill="#000"/>
<rect x="207" y="727.5" width="1" height="87.3891" fill="#000"/>
<rect x="211" y="727.5" width="1" height="85.9113" fill="#000"/>
<rect x="214" y="727.5" width="1" height="84.5313" fill="#000"/>
<rect x="218" y="727.5" width="1" height="83.2406" fill="#000"/>
<rect x="222" y="727.5" width="1" height="82.0318" fill="#000"/>
<rect x="225" y="727.5" width="1" height="80.898" fill="#000"/>
<rect x="229" y="727.5" width="1" height="79.8331" fill="#000"/>
<rect x="177" y="727.5" width="1" height="3.97203" fill="#000"/>
<rect x="181" y="727.5" width="1" height="6.79127" fill="#000"/>
<rect x="184" y="727.5" width="1" height="9.38157" fill="#000"/>
<rect x="188" y="727.5" width="1" height="11.7671" fill="#000"/>
<rect x="191" y="727.5" width="1" height="13.9688" fill="#000"/>
<rect x="195" y="727.5" width="1" height="16.0051" fill="#000"/>
<rect x="199" y="727.5" width="1" height="17.8923" fill="#000"/>
<rect x="202" y="727.5" width="1" height="19.6444" fill="#000"/>
<rect x="206" y="727.5" width="1" height="21.2742" fill="#000"/>
<rect x="209" y="727.5" width="1" height="22.7926" fill="#000"/>
<rect x="213" y="727.5" width="1" height="24.2097" fill="#000"/>
<rect x="217" y="727.5" width="1" height="25.5343" fill="#000"/>
<rect x="220" y="727.5" width="1" height="26.7742" fill="#000"/>
<rect x="224" y="727.5" width="1" height="27.9365" fill="#000"/>
<rect x="227" y="727.5" width="1" height="29.0276" fill="#000"/>
<rect x="231" y="727.5" width="1" height="30.0531" fill="#000"/>
<rect x="173" y="582" width="60" height="1" fill="#000"/>
<rect x="173" y="872" width="60" height="1" fill="#000"/>
<rect x="233" y="619" width="105" height="1" fill="#000"/>
<rect x="233" y="835" width="105" height="1" fill="#000"/>
<rect x="337" y="582" width="1" height="291" fill="#000"/>
<rect x="232" y="582" width="1" height="291" fill="#000"/>
<rect x="172" y="582" width="1" height="291" fill="#000"/>
<polyline points="53.30,615.98 74.81,617.84 83.59,619.70 90.24,621.56 95.77,623.41 100.58,625.27 104.87,627.13 108.75,628.99 112.32,630.85 115.62,632.71 118.69,634.57 121.57,636.43 124.28,638.28 126.84,640.14 129.25,642.00 131.55,643.86 133.73,645.72 135.80,647.58 137.78,649.44 139.67,651.29 141.48,653.15 143.20,655.01 144.85,656.87 146.43,658.73 147.94,660.59 149.39,662.45 150.77,664.31 152.10,666.16 153.37,668.02 154.59,669.88 155.75,671.74 156.86,673.60 157.93,675.46 158.95,677.32 159.92,679.17 160.84,681.03 161.72,682.89 162.56,684.75 163.36,686.61 164.12,688.47 164.83,690.33 165.51,692.19 166.15,694.04 166.75,695.90 167.32,697.76 167.84,699.62 168.33,701.48 168.79,703.34 169.21,705.20 169.59,707.05 169.95,708.91 170.26,710.77 170.54,712.63 170.79,714.49 171.01,716.35 171.19,718.21 171.34,720.07 171.45,721.92 171.53,723.78 171.58,725.64 171.60,727.50 171.58,729.36 171.53,731.22 171.45,733.08 171.34,734.93 171.19,736.79 171.01,738.65 170.79,740.51 170.54,742.37 170.26,744.23 169.95,746.09 169.59,747.95 169.21,749.80 168.79,751.66 168.33,753.52 167.84,755.38 167.32,757.24 166.75,759.10 166.15,760.96 165.51,762.81 164.83,764.67 164.12,766.53 163.36,768.39 162.56,770.25 161.72,772.11 160.84,773.97 159.92,775.83 158.95,777.68 157.93,779.54 156.86,781.40 155.75,783.26 154.59,785.12 153.37,786.98 152.10,788.84 150.77,790.69 149.39,792.55 147.94,794.41 146.43,796.27 144.85,798.13 143.20,799.99 141.48,801.85 139.67,803.71 137.78,805.56 135.80,807.42 133.73,809.28 131.55,811.14 129.25,813.00 126.84,814.86 124.28,816.72 121.57,818.57 118.69,820.43 115.62,822.29 112.32,824.15 108.75,826.01 104.87,827.87 100.58,829.73 95.77,831.59 90.24,833.44 83.59,835.30 74.81,837.16 53.30,839.02" fill="none" stroke="#000" stroke-width="1" shape-rendering="crispEdges"/>
<polyline points="161.74,594.80 164.74,597.01 167.61,599.22 170.37,601.44 173.01,603.65 175.56,605.86 178.00,608.07 180.36,610.28 182.63,612.49 184.82,614.71 186.93,616.92 188.97,619.13 190.94,621.34 192.84,623.55 194.68,625.76 196.45,627.98 198.16,630.19 199.82,632.40 201.42,634.61 202.96,636.82 204.46,639.03 205.90,641.25 207.29,643.46 208.63,645.67 209.93,647.88 211.18,650.09 212.39,652.30 213.55,654.51 214.67,656.73 215.75,658.94 216.79,661.15 217.79,663.36 218.75,665.57 219.67,667.78 220.55,670.00 221.39,672.21 222.20,674.42 222.97,676.63 223.70,678.84 224.40,681.05 225.06,683.27 225.69,685.48 226.28,687.69 226.84,689.90 227.37,692.11 227.86,694.33 228.32,696.54 228.75,698.75 229.14,700.96 229.51,703.17 229.84,705.38 230.13,707.60 230.40,709.81 230.64,712.02 230.84,714.23 231.01,716.44 231.15,718.65 231.26,720.87 231.34,723.08 231.38,725.29 231.40,727.50 231.38,729.71 231.34,731.92 231.26,734.13 231.15,736.35 231.01,738.56 230.84,740.77 230.64,742.98 230.40,745.19 230.13,747.40 229.84,749.62 229.51,751.83 229.14,754.04 228.75,756.25 228.32,758.46 227.86,760.67 227.37,762.89 226.84,765.10 226.28,767.31 225.69,769.52 225.06,771.73 224.40,773.94 223.70,776.16 222.97,778.37 222.20,780.58 221.39,782.79 220.55,785.00 219.67,787.22 218.75,789.43 217.79,791.64 216.79,793.85 215.75,796.06 214.67,798.27 213.55,800.49 212.39,802.70 211.18,804.91 209.93,807.12 208.63,809.33 207.29,811.54 205.90,813.75 204.46,815.97 202.96,818.18 201.42,820.39 199.82,822.60 198.16,824.81 196.45,827.02 194.68,829.24 192.84,831.45 190.94,833.66 188.97,835.87 186.93,838.08 184.82,840.29 182.63,842.51 180.36,844.72 178.00,846.93 175.56,849.14 173.01,851.35 170.37,853.57 167.61,855.78 164.74,857.99 161.74,860.20" fill="none" stroke="#000" stroke-width="1" shape-rendering="crispEdges"/>
<polyline points="298.00,594.80 299.35,597.01 300.68,599.22 301.97,601.44 303.23,603.65 304.47,605.86 305.67,608.07 306.85,610.28 308.00,612.49 309.13,614.71 310.23,616.92 311.30,619.13 312.34,621.34 313.36,623.55 314.36,625.76 315.33,627.98 316.27,630.19 317.19,632.40 318.09,634.61 318.96,636.82 319.81,639.03 320.64,641.25 321.44,643.46 322.22,645.67 322.97,647.88 323.70,650.09 324.42,652.30 325.10,654.51 325.77,656.73 326.41,658.94 327.03,661.15 327.63,663.36 328.21,665.57 328.77,667.78 329.31,670.00 329.82,672.21 330.31,674.42 330.79,676.63 331.24,678.84 331.67,681.05 332.08,683.27 332.47,685.48 332.84,687.69 333.19,689.90 333.52,692.11 333.82,694.33 334.11,696.54 334.38,698.75 334.63,700.96 334.85,703.17 335.06,705.38 335.25,707.60 335.42,709.81 335.57,712.02 335.69,714.23 335.80,716.44 335.89,718.65 335.96,720.87 336.01,723.08 336.04,725.29 336.05,727.50 336.04,729.71 336.01,731.92 335.96,734.13 335.89,736.35 335.80,738.56 335.69,740.77 335.57,742.98 335.42,745.19 335.25,747.40 335.06,749.62 334.85,751.83 334.63,754.04 334.38,756.25 334.11,758.46 333.82,760.67 333.52,762.89 333.19,765.10 332.84,767.31 332.47,769.52 332.08,771.73 331.67,773.94 331.24,776.16 330.79,778.37 330.31,780.58 329.82,782.79 329.31,785.00 328.77,787.22 328.21,789.43 327.63,791.64 327.03,793.85 326.41,796.06 325.77,798.27 325.10,800.49 324.42,802.70 323.70,804.91 322.97,807.12 322.22,809.33 321.44,811.54 320.64,813.75 319.81,815.97 318.96,818.18 318.09,820.39 317.19,822.60 316.27,824.81 315.33,827.02 314.36,829.24 313.36,831.45 312.34,833.66 311.30,835.87 310.23,838.08 309.13,840.29 308.00,842.51 306.85,844.72 305.67,846.93 304.47,849.14 303.23,851.35 301.97,853.57 300.68,855.78 299.35,857.99 298.00,860.20" fill="none" stroke="#000" stroke-width="1" shape-rendering="crispEdges"/>
<text x="341.6" y="687" font-size="9.8" textLength="27.20" lengthAdjust="spacingAndGlyphs" stroke="#000" stroke-width="0.15">Sig.vA</text>
<text x="341.6" y="695.8" font-size="9.8" textLength="24.70" lengthAdjust="spacingAndGlyphs" stroke="#000" stroke-width="0.15">Sig.tA</text>
<text x="341.6" y="726.9" font-size="9.8" textLength="24.70" lengthAdjust="spacingAndGlyphs" stroke="#000" stroke-width="0.15">Sig.rA</text>
<text x="235.5" y="757" font-size="9.8" textLength="33.50" lengthAdjust="spacingAndGlyphs" stroke="#000" stroke-width="0.15">Sigma rI</text>
<text x="235.5" y="812" font-size="9.8" textLength="33.50" lengthAdjust="spacingAndGlyphs" stroke="#000" stroke-width="0.15">Sigma tI</text>
<text x="146.25" y="665" font-size="9.8" textLength="36.70" lengthAdjust="spacingAndGlyphs" stroke="#000" stroke-width="0.15">Sigma vI</text>
<text x="250.5" y="833.75" font-size="9.8" textLength="21.20" lengthAdjust="spacingAndGlyphs" stroke="#000" stroke-width="0.15">Re A</text>
<text x="71.25" y="869.5" font-size="9.8" textLength="17.20" lengthAdjust="spacingAndGlyphs" stroke="#000" stroke-width="0.15">Re I</text>
<text x="484.5" y="525" font-size="10.1" textLength="81.40" lengthAdjust="spacingAndGlyphs" xml:space="preserve">Abmessungen:</text>
<text x="484.5" y="543" font-size="10.1" textLength="70.15" lengthAdjust="spacingAndGlyphs" xml:space="preserve">DAa= 95 mm</text>
<text x="484.5" y="556" font-size="10.1" textLength="65.15" lengthAdjust="spacingAndGlyphs" xml:space="preserve">DF = 60 mm</text>
<text x="484.5" y="569" font-size="10.1" textLength="61.15" lengthAdjust="spacingAndGlyphs" xml:space="preserve">DIi= 40 mm</text>
<text x="484.5" y="582.75" font-size="10.1" textLength="56.15" lengthAdjust="spacingAndGlyphs" xml:space="preserve">lf = 20 mm</text>
<text x="484.5" y="610" font-size="10.1" textLength="73.40" lengthAdjust="spacingAndGlyphs" xml:space="preserve">Spannungen:</text>
<text x="484.5" y="627" font-size="10.1" textLength="99.15" lengthAdjust="spacingAndGlyphs" xml:space="preserve">Sig.tAi =  105 MPa</text>
<text x="484.5" y="640.5" font-size="10.1" textLength="99.15" lengthAdjust="spacingAndGlyphs" xml:space="preserve">Sig.tAa =   60 MPa</text>
<text x="484.5" y="653.75" font-size="10.1" textLength="97.15" lengthAdjust="spacingAndGlyphs" xml:space="preserve">Sig.rAi =  -45 MPa</text>
<text x="484.5" y="667.5" font-size="10.1" textLength="96.15" lengthAdjust="spacingAndGlyphs" xml:space="preserve">Sig.rAa =    0 MPa</text>
<text x="484.5" y="680.75" font-size="10.1" textLength="102.15" lengthAdjust="spacingAndGlyphs" xml:space="preserve">Sig.vAi =  133 MPa</text>
<text x="484.5" y="694.5" font-size="10.1" textLength="102.15" lengthAdjust="spacingAndGlyphs" xml:space="preserve">Sig.vAa =   60 MPa</text>
<text x="484.5" y="707.75" font-size="10.1" textLength="90.15" lengthAdjust="spacingAndGlyphs" xml:space="preserve">Re A =  160 MPa</text>
<text x="484.5" y="735" font-size="10.1" textLength="95.15" lengthAdjust="spacingAndGlyphs" xml:space="preserve">Sig.tIi = -162 MPa</text>
<text x="484.5" y="748.25" font-size="10.1" textLength="99.15" lengthAdjust="spacingAndGlyphs" xml:space="preserve">Sig.tIa = -117 MPa</text>
<text x="484.5" y="761.75" font-size="10.1" textLength="87.15" lengthAdjust="spacingAndGlyphs" xml:space="preserve">Sig.rIi =    0 MPa</text>
<text x="484.5" y="775" font-size="10.1" textLength="95.90" lengthAdjust="spacingAndGlyphs" xml:space="preserve">Sig.rIa =  -45 MPa</text>
<text x="484.5" y="788.5" font-size="10.1" textLength="97.15" lengthAdjust="spacingAndGlyphs" xml:space="preserve">Sig.vIi =  162 MPa</text>
<text x="484.5" y="802" font-size="10.1" textLength="101.15" lengthAdjust="spacingAndGlyphs" xml:space="preserve">Sig.vIa =  102 MPa</text>
<text x="484.5" y="815.5" font-size="10.1" textLength="85.15" lengthAdjust="spacingAndGlyphs" xml:space="preserve">Re I =  215 MPa</text>
<text x="10.75" y="938.75" font-size="7" textLength="549.00" lengthAdjust="spacingAndGlyphs" xml:space="preserve" stroke="#000" stroke-width="0.2">31.10.2010 10:59 - HEXAGON WN1 V11.01 #0073 - DIETZ-MOTOREN  Dettingen - H:\APPS\TP\WN1DISK\D\DECKER2.wn1</text>
</svg>
</body></html>
